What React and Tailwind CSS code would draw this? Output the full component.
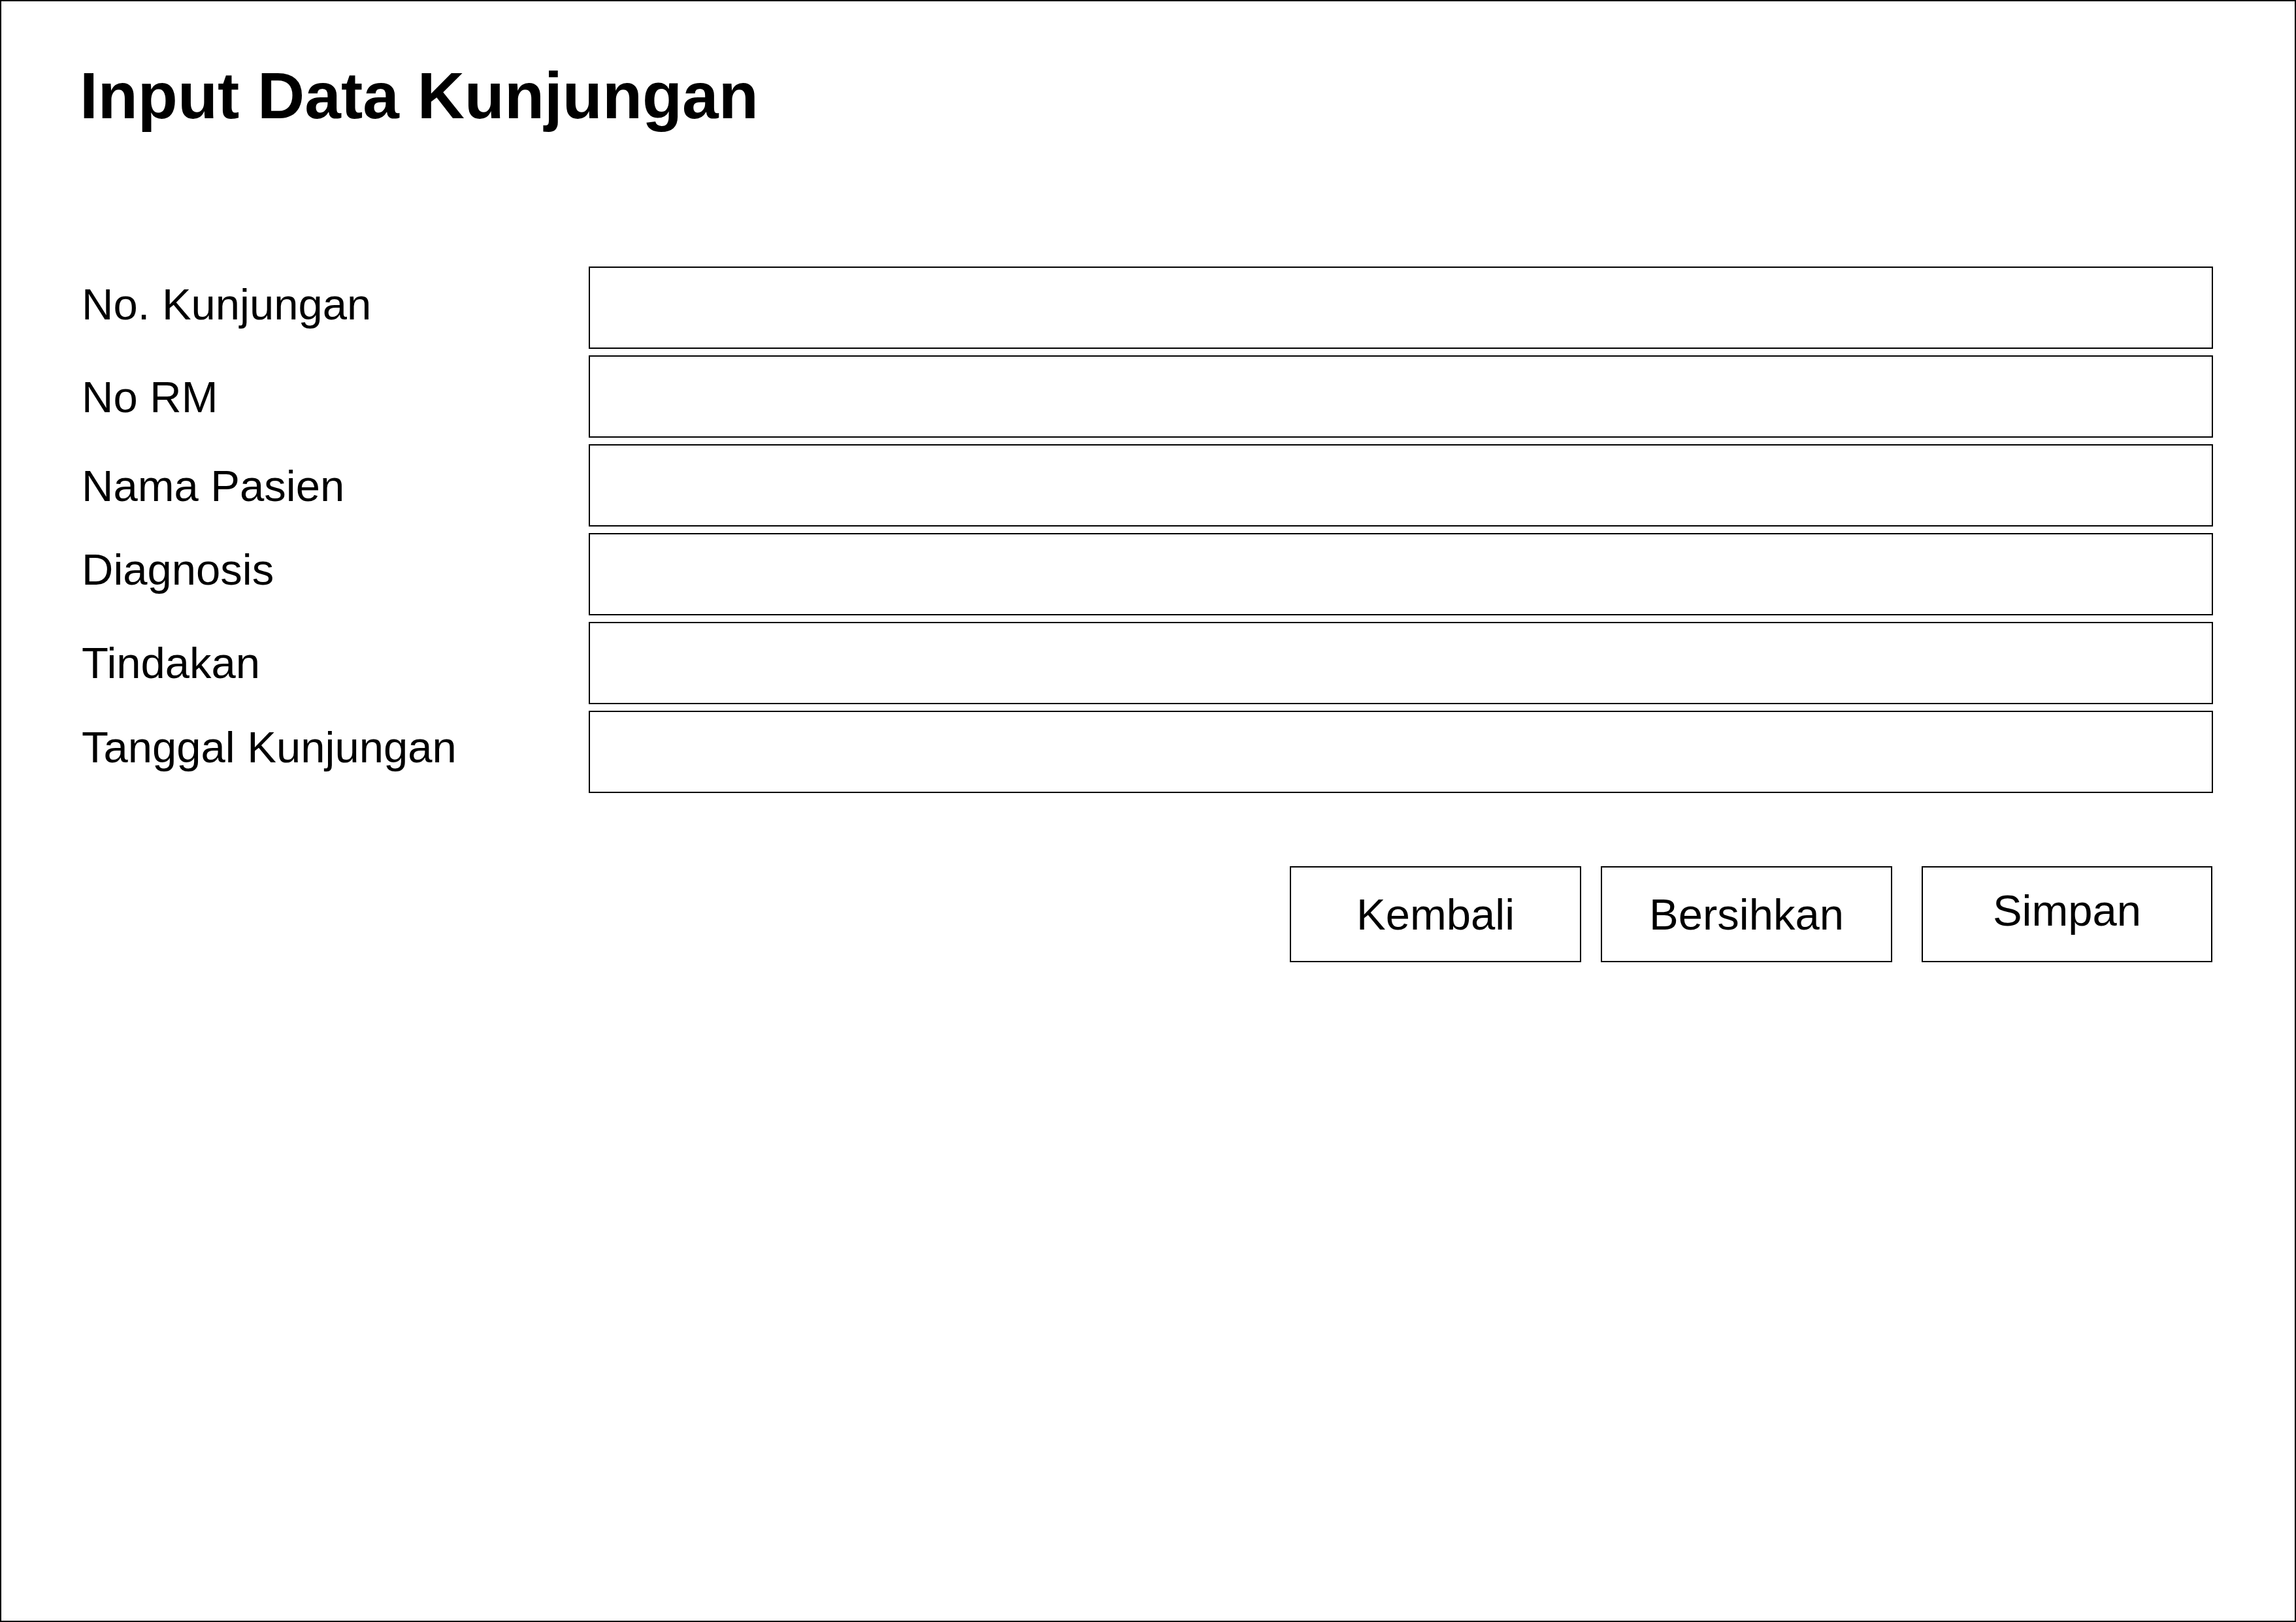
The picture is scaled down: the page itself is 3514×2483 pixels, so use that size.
const fields = [
  { label: 'No. Kunjungan', pad: 'pt-[24px]' },
  { label: 'No RM', pad: 'pt-[30px]' },
  { label: 'Nama Pasien', pad: 'pt-[30px]' },
  { label: 'Diagnosis', pad: 'pt-[22px]' },
  { label: 'Tindakan', pad: 'pt-[29px]' },
  { label: 'Tanggal Kunjungan', pad: 'pt-[22px]' },
];

function FieldRow({ label, pad }) {
  return (
    <div className="flex h-[126px]">
      <div className={`w-[776px] shrink-0 text-[67px] leading-none ${pad}`}>{label}</div>
      <div className="w-[2486px] h-[126px] border-2 border-black bg-white" />
    </div>
  );
}

function Button({ children, className = '' }) {
  return (
    <button
      type="button"
      className={`h-[147px] border-2 border-black bg-white flex items-center justify-center text-[67px] leading-none ${className}`}
    >
      {children}
    </button>
  );
}

export default function App() {
  return (
    <div className="w-[3514px] h-[2483px] border-2 border-black bg-white text-black font-['Liberation_Sans',Arial,sans-serif] pl-[123px] pt-[94px]">
      <h1 className="-ml-[3px] text-[100px] font-bold leading-none">Input Data Kunjungan</h1>

      <div className="mt-[212px] flex flex-col gap-[10px]">
        {fields.map((f) => (
          <FieldRow key={f.label} label={f.label} pad={f.pad} />
        ))}
      </div>

      <div className="mt-[112px] flex justify-end pr-[126px]">
        <Button className="w-[446px]">Kembali</Button>
        <Button className="w-[446px] ml-[30px]">Bersihkan</Button>
        <Button className="w-[445px] ml-[45px] pb-3">Simpan</Button>
      </div>
    </div>
  );
}
